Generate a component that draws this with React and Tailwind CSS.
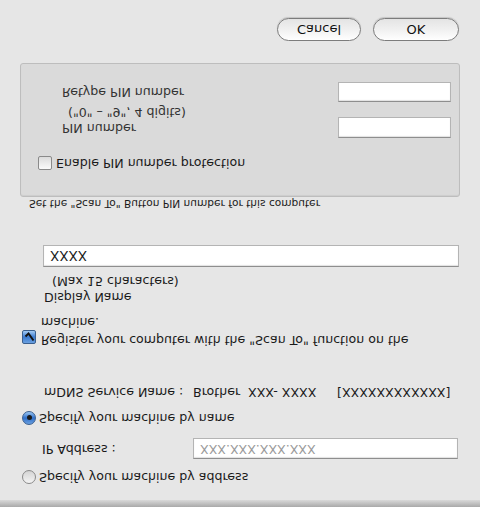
import React from 'react';

const Radio = ({ checked }) =>
  checked ? (
    <span className="w-[14px] h-[14px] rounded-full border border-[#3a5f8f] bg-gradient-to-b from-[#6aa0e0] via-[#2f6fc8] to-[#9cc8f4] flex items-center justify-center shrink-0">
      <span className="w-[5px] h-[5px] rounded-full bg-[#1a1a1a]" />
    </span>
  ) : (
    <span className="w-[14px] h-[14px] rounded-full border border-[#8a8a8a] bg-gradient-to-b from-[#f4f4f4] to-[#d4d4d4] shrink-0" />
  );

const Checkbox = ({ checked }) =>
  checked ? (
    <span className="w-[14px] h-[14px] rounded-[2px] border border-[#3a5f8f] bg-gradient-to-b from-[#6aa0e0] via-[#3a7ad0] to-[#a4ccf4] flex items-center justify-center shrink-0">
      <svg width="11" height="11" viewBox="0 0 11 11">
        <path d="M1.5 5.5 L4.5 8.5 L9.5 1.5" fill="none" stroke="#111" strokeWidth="2" />
      </svg>
    </span>
  ) : (
    <span className="w-[14px] h-[14px] rounded-[2px] border border-[#8a8a8a] bg-gradient-to-b from-[#fbfbfb] to-[#dcdcdc] shrink-0" />
  );

const Field = ({ className, children }) => (
  <div className={`bg-white border border-[#b4b4b4] border-t-[#8e8e8e] shadow-[inset_0_1px_1px_rgba(0,0,0,0.12)] flex items-center shrink-0 ${className}`}>
    {children}
  </div>
);

const PillButton = ({ label, className }) => (
  <button className={`h-[23px] rounded-full border border-[#7c7c7c] bg-gradient-to-b from-[#ffffff] via-[#f0f0f0] to-[#e4e4e4] shadow-[0_1px_1px_rgba(0,0,0,0.15)] text-[13px] text-[#111] ${className}`}>
    {label}
  </button>
);

export default function App() {
  return (
    <div className="w-[480px] h-[507px] overflow-hidden bg-[#e6e6e6] -scale-y-100 text-[#1a1a1a] text-[12.6px] font-['DejaVu_Sans',sans-serif]">
      {/* window edge */}
      <div className="h-[7px] bg-gradient-to-b from-[#a9a9a9] to-[#d9d9d9]" />

      <div className="pl-[22px] pr-[21px]">
        {/* address radio */}
        <div className="mt-[13px] h-[20px] flex items-center gap-[3px]">
          <Radio />
          <span>Specify your machine by address</span>
        </div>

        {/* IP address */}
        <div className="mt-[8px] h-[21px] flex items-center">
          <span className="w-[171px] shrink-0 pl-[20px]">IP Address :</span>
          <Field className="w-[265px] h-[21px] pl-[6px] text-[#9a9a9a]">XXX.XXX.XXX.XXX</Field>
        </div>

        {/* name radio */}
        <div className="mt-[10px] h-[20px] flex items-center gap-[3px]">
          <Radio checked />
          <span>Specify your machine by name</span>
        </div>

        {/* mDNS */}
        <div className="mt-[6px] h-[20px] flex items-center whitespace-nowrap">
          <span className="w-[171px] shrink-0 pl-[22px]">mDNS Service Name :</span>
          <span className="w-[55px] shrink-0">Brother</span>
          <span className="w-[89px] shrink-0">XXX- XXXX</span>
          <span>[XXXXXXXXXXXX]</span>
        </div>

        {/* register */}
        <div className="mt-[33px] flex items-start gap-[5px]">
          <div className="pt-[5px]">
            <Checkbox checked />
          </div>
          <div className="leading-[18px]">
            <div>Register your computer with the "Scan To" function on the</div>
            <div>machine.</div>
          </div>
        </div>

        {/* display name */}
        <div className="mt-[8px] pl-[22px] leading-[16px]">
          <div>Display Name</div>
          <div className="pl-[8px]">(Max 15 characters)</div>
        </div>

        <Field className="mt-[6px] ml-[21px] w-[416px] h-[22px] pl-[6px] text-[13.5px]">XXXX</Field>

        {/* PIN caption */}
        <div className="mt-[34px] h-[14px] pl-[7px] text-[10.6px] leading-[14px]">
          Set the "Scan To" Button PIN number for this computer
        </div>

        {/* PIN group */}
        <div className="-ml-[2px] w-[440px] h-[134px] rounded-[3px] border border-[#bdbdbd] bg-[#dadada] shadow-[inset_0_1px_1px_rgba(0,0,0,0.06)] pl-[17px] pr-[8px]">
          <div className="mt-[23px] h-[20px] flex items-center gap-[4px]">
            <Checkbox />
            <span>Enable PIN number protection</span>
          </div>
          <div className="mt-[15px] flex items-start justify-between">
            <div className="pl-[24px] pt-[2px] leading-[16px] text-[#333]">
              <div>PIN number</div>
              <div className="pl-[6px]">("0" – "9",  4 digits)</div>
            </div>
            <Field className="w-[113px] h-[21px]" />
          </div>
          <div className="mt-[2px] flex items-center justify-between">
            <span className="pl-[24px] text-[#333]">Retype PIN number</span>
            <Field className="w-[113px] h-[20px]" />
          </div>
        </div>

        {/* buttons */}
        <div className="mt-[22px] flex justify-end gap-[12px]">
          <PillButton label="Cancel" className="w-[84px]" />
          <PillButton label="OK" className="w-[86px]" />
        </div>
      </div>
    </div>
  );
}
